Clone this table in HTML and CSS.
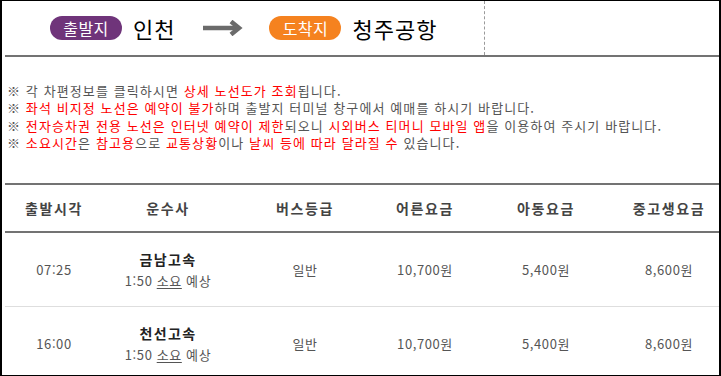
FILE: index.html
```html
<!DOCTYPE html>
<html lang="ko">
<head>
<meta charset="utf-8">
<title>배차 조회</title>
<link rel="stylesheet" href="styles.css">
</head>
<body>
<div class="frame">
  <header class="route">
    <div class="route-main">
      <span class="pill pill-dep">출발지</span>
      <span class="place">인천</span>
      <svg class="arrow" width="40" height="16" viewBox="0 0 40 16" aria-hidden="true">
        <path d="M0 8 H36" stroke="#6b6b6b" stroke-width="4.5" fill="none"/>
        <path d="M28 1.5 L36 8 L28 14.5" stroke="#6b6b6b" stroke-width="4.5" fill="none" stroke-linejoin="miter"/>
      </svg>
      <span class="pill pill-arr">도착지</span>
      <span class="place">청주공항</span>
    </div>
    <div class="route-side"></div>
  </header>

  <ul class="notes">
    <li>※ 각 차편정보를 클릭하시면 <em>상세 노선도가 조회</em>됩니다.</li>
    <li>※ <em>좌석 비지정 노선은 예약이 불가</em>하며 출발지 터미널 창구에서 예매를 하시기 바랍니다.</li>
    <li>※ <em>전자승차권 전용 노선은 인터넷 예약이 제한</em>되오니 <em>시외버스 티머니 모바일 앱</em>을 이용하여 주시기 바랍니다.</li>
    <li>※ <em>소요시간</em>은 <em>참고용</em>으로 <em>교통상황</em>이나 <em>날씨 등에 따라 달라질 수</em> 있습니다.</li>
  </ul>

  <div class="table">
    <div class="row head">
      <div>출발시각</div><div>운수사</div><div>버스등급</div><div>어른요금</div><div>아동요금</div><div>중고생요금</div>
    </div>
    <div class="row">
      <div>07:25</div>
      <div class="co"><strong>금남고속</strong><span>1:50 <u>소요</u> 예상</span></div>
      <div>일반</div><div>10,700원</div><div>5,400원</div><div>8,600원</div>
    </div>
    <div class="row">
      <div>16:00</div>
      <div class="co"><strong>천선고속</strong><span>1:50 <u>소요</u> 예상</span></div>
      <div>일반</div><div>10,700원</div><div>5,400원</div><div>8,600원</div>
    </div>
  </div>
</div>
</body>
</html>
```

FILE: styles.css
```css
html, body {
  margin: 0;
  padding: 0;
  background: #fff;
}
body {
  font-family: "Noto Sans CJK KR", "Noto Sans", sans-serif;
  color: #555;
}
.frame {
  box-sizing: border-box;
  width: 721px;
  height: 376px;
  border-style: solid;
  border-color: #000;
  border-width: 1px 2px 1px 2px;
  padding-left: 3px;
  overflow: hidden;
}
.route {
  display: flex;
  height: 54px;
  border-bottom: 2px solid #737373;
}
.route-main {
  width: 480px;
  display: flex;
  align-items: center;
  padding-left: 45px;
  box-sizing: border-box;
  border-right: 1px dashed #9a9a9a;
}
.route-side {
  flex: 1;
}
.pill {
  display: inline-flex;
  align-items: center;
  justify-content: center;
  width: 72px;
  height: 24px;
  border-radius: 12px;
  color: #fff;
  font-size: 16px;
  letter-spacing: 0.5px;
  line-height: 1;
}
.pill-dep { background: #6f347a; }
.pill-arr { background: #f5821f; }
.place {
  font-size: 22px;
  letter-spacing: 1px;
  color: #000;
  margin-left: 11px;
  line-height: 1;
}
.arrow {
  margin-left: 28px;
  margin-right: 26px;
}
.notes {
  list-style: none;
  margin: 0;
  padding: 25px 0 0 2px;
  height: 126px;
  box-sizing: border-box;
  font-size: 13px;
  letter-spacing: 1.1px;
  line-height: 17.3px;
  color: #555;
}
.notes em {
  font-style: normal;
  color: #f00;
}
.table {
  border-top: 2px solid #737373;
}
.row {
  display: grid;
  grid-template-columns: 98px 130px 144px 96px 146px 1fr;
  text-align: center;
  align-items: center;
  height: 73px;
  border-bottom: 1px solid #dedede;
  font-size: 13px;
  letter-spacing: 0.6px;
  color: #555;
}
.row.head {
  height: 46px;
  border-bottom: 2px solid #737373;
  font-size: 14px;
  letter-spacing: 1.6px;
  font-weight: 700;
  color: #444;
}
.co {
  display: flex;
  flex-direction: column;
  align-items: center;
  gap: 2px;
}
.co strong {
  font-size: 14px;
  letter-spacing: 1.4px;
  color: #222;
  line-height: 19px;
}
.co span {
  line-height: 19px;
}
.co u {
  text-decoration-thickness: 1px;
  text-underline-offset: 2px;
}
```
